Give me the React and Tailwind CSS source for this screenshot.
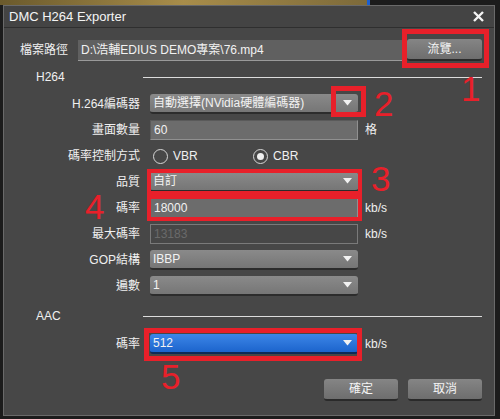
import React from 'react'

const font = { fontFamily: '"Liberation Sans", "Noto Sans CJK TC", sans-serif' }

function Arrow() {
    return (
        <svg width="9" height="6" viewBox="0 0 9 6" className="shrink-0">
            <path d="M0 0 H9 L4.5 5.5 Z" fill="#f2f2f2" />
        </svg>
    )
}

function Select({ value, blue }) {
    return (
        <div
            className={
                'w-[208px] h-[20px] rounded-[3px] flex items-center justify-between pl-[3px] pr-[6px] text-[12px] text-[#f2f2f2] border-b-2 ' +
                (blue
                    ? 'bg-gradient-to-b from-[#3c86e8] to-[#1c64cc] border-[#0d2a57]'
                    : 'bg-gradient-to-b from-[#8a8a8a] to-[#767676] border-[#2c2c2c]')
            }
        >
            <span>{value}</span>
            <Arrow />
        </div>
    )
}

function Input({ value, disabled }) {
    return (
        <div
            className={
                'w-[208px] h-[20px] flex items-center px-[3px] text-[12px] border ' +
                (disabled
                    ? 'bg-[#474747] border-[#7a7a7a] text-[#6a6a6a]'
                    : 'bg-[#6c6c6c] border-t-[#5a5a5a] border-l-[#5a5a5a] border-r-[#909090] border-b-[#909090] text-[#f2f2f2]')
            }
        >
            {value}
        </div>
    )
}

function Row({ label, children, unit }) {
    return (
        <div className="flex items-center h-[26px]">
            <div className="w-[136px] text-right text-[12px] text-[#f0f0f0]">{label}</div>
            <div className="ml-[10px]">{children}</div>
            {unit && <div className="ml-[7px] text-[12px] text-[#f0f0f0]">{unit}</div>}
        </div>
    )
}

function Section({ title }) {
    return (
        <div className="flex items-center h-[20px]">
            <div className="w-[139px] pl-[32px] text-[12px] text-[#f0f0f0]">{title}</div>
            <div className="flex-1 h-px bg-[#dcdcdc] mr-[12px]" />
        </div>
    )
}

function Radio({ label, checked }) {
    return (
        <div className="flex items-center gap-[5px] text-[12px] text-[#f0f0f0]">
            <div className="w-[15px] h-[15px] rounded-full border border-[#d6d6d6] flex items-center justify-center">
                {checked && <div className="w-[7px] h-[7px] rounded-full bg-[#f0f0f0]" />}
            </div>
            {label}
        </div>
    )
}

function Button({ children, className = '' }) {
    return (
        <div className={'h-[22px] rounded-[3px] bg-gradient-to-b from-[#858585] to-[#6e6e6e] border-b-2 border-[#2a2a2a] flex items-center justify-center text-[12px] text-[#f4f4f4] ' + className}>
            {children}
        </div>
    )
}

// big red step numbers drawn over the dialog
const mark = 'absolute text-[#e8202a] text-[35px] leading-[26px]'

export default function App() {
    return (
        <div className="relative w-[500px] h-[419px] bg-[#1c1c1c] overflow-hidden" style={font}>
            {/* background strip behind the dialog */}
            <div className="flex h-[5px]">
                <div className="w-[367px] bg-gradient-to-r from-[#6b5a2c] via-[#a88d4a] to-[#7d6a3a]" />
                <div className="w-[3px] bg-[#1b5fd0]" />
            </div>

            <div className="ml-[3px] w-[492px] h-[411px] bg-[#474747] border border-[#6a6a6a] flex flex-col">
                {/* title bar */}
                <div className="h-[22px] flex items-center justify-between pl-[5px] pr-[10px] bg-[#444444] border-b border-[#2f2f2f]">
                    <span className="text-[13px] text-[#f4f4f4]">DMC H264 Exporter</span>
                    <svg width="11" height="11" viewBox="0 0 11 11">
                        <path d="M1 1 L10 10 M10 1 L1 10" stroke="#f4f4f4" strokeWidth="2.4" />
                    </svg>
                </div>

                <div className="flex flex-col pt-[11px]">
                    {/* file path */}
                    <div className="flex items-center h-[22px] pl-[16px]">
                        <span className="w-[48px] text-[12px] text-[#f0f0f0]">檔案路徑</span>
                        <div className="ml-[10px] w-[327px] h-[21px] bg-[#606060] border-b border-[#9a9a9a] flex items-center px-[3px] text-[12px] text-[#f2f2f2]">
                            D:\浩輔EDIUS DEMO專案\76.mp4
                        </div>
                        <Button className="ml-[2px] w-[75px]">流覽...</Button>
                    </div>

                    <div className="mt-[6px]">
                        <Section title="H264" />
                    </div>

                    <div className="mt-[4px] flex flex-col">
                        <Row label="H.264編碼器">
                            <Select value="自動選擇(NVidia硬體編碼器)" />
                        </Row>
                        <Row label="畫面數量" unit="格">
                            <Input value="60" />
                        </Row>
                        <Row label="碼率控制方式">
                            <div className="flex items-center w-[208px] pl-[3px]">
                                <div className="w-[100px]">
                                    <Radio label="VBR" />
                                </div>
                                <Radio label="CBR" checked />
                            </div>
                        </Row>
                        <Row label="品質">
                            <Select value="自訂" />
                        </Row>
                        <Row label="碼率" unit="kb/s">
                            <Input value="18000" />
                        </Row>
                        <Row label="最大碼率" unit="kb/s">
                            <Input value="13183" disabled />
                        </Row>
                        <Row label="GOP結構">
                            <Select value="IBBP" />
                        </Row>
                        <Row label="遍數">
                            <Select value="1" />
                        </Row>
                    </div>

                    <div className="mt-[7px]">
                        <Section title="AAC" />
                    </div>

                    <div className="mt-[5px]">
                        <Row label="碼率" unit="kb/s">
                            <Select value="512" blue />
                        </Row>
                    </div>

                    <div className="mt-[22px] flex justify-end gap-[10px] pr-[12px]">
                        <Button className="w-[74px]">確定</Button>
                        <Button className="w-[74px]">取消</Button>
                    </div>
                </div>
            </div>

            {/* red annotations */}
            <div className="absolute left-[402px] top-[29px] w-[87px] h-[39px] border-[5px] border-[#e8202a]" />
            <div className={mark + ' left-[461px] top-[76px]'}>1</div>
            <div className="absolute left-[331px] top-[86px] w-[35px] h-[31px] border-[5px] border-[#e8202a]" />
            <div className={mark + ' left-[374px] top-[91px]'}>2</div>
            <div className="absolute left-[147px] top-[169px] w-[215px] h-[52px] border-[4px] border-[#e8202a]" />
            <div className="absolute left-[147px] top-[191px] w-[215px] h-[8px] bg-[#e8202a]" />
            <div className={mark + ' left-[371px] top-[166px]'}>3</div>
            <div className={mark + ' left-[85px] top-[194px]'}>4</div>
            <div className="absolute left-[144px] top-[328px] w-[218px] h-[33px] border-[5px] border-[#e8202a]" />
            <div className={mark + ' left-[161px] top-[364px]'}>5</div>
        </div>
    )
}
